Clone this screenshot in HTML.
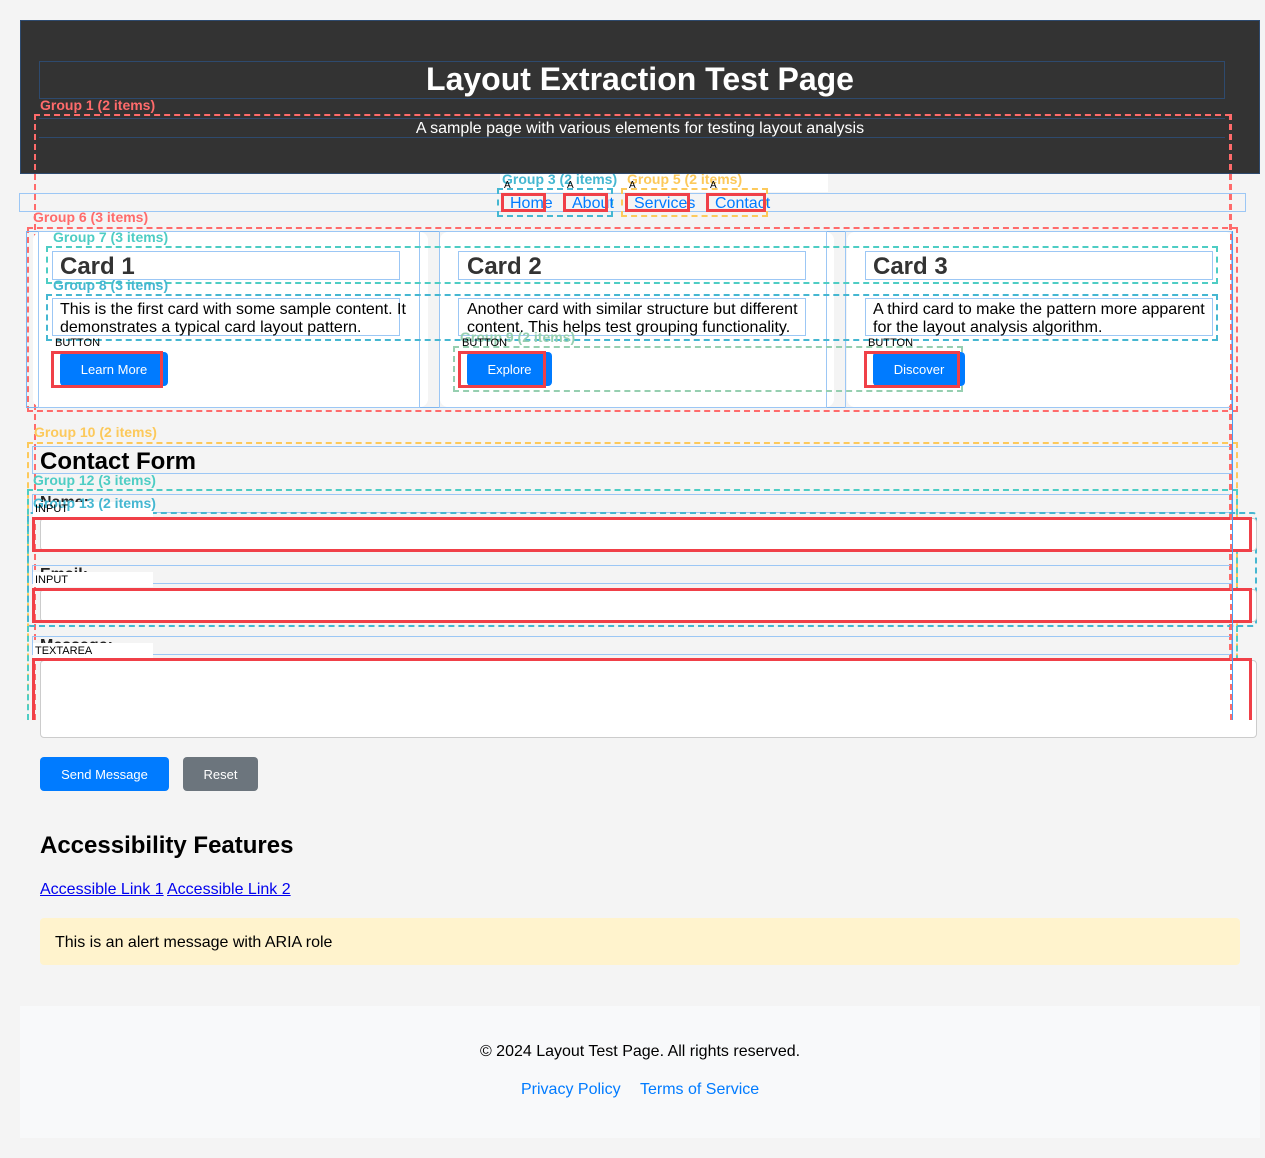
<!DOCTYPE html>
<html><head><meta charset="utf-8"><style>
*{box-sizing:border-box;margin:0;padding:0}
body{width:1265px;height:1158px;background:#f4f4f4;font-family:"Liberation Sans",Arial,sans-serif;position:relative;overflow:hidden;color:#000}
.a{position:absolute}
.blue{border:1px solid #9cc7f5}
.card{background:#fff;border-radius:8px}
.btn{background:#007bff;color:#fff;font-size:13px;border-radius:4px;display:flex;align-items:center;justify-content:center}
.lbl{font-size:14px;font-weight:bold;white-space:nowrap}
.tag{font-size:11px;white-space:nowrap;color:#000}
.red{border:2px dashed #ff6b6b}
.teal{border:2px dashed #4ecdc4}
.cyan{border:2px dashed #45b7d1}
.yel{border:2px dashed #fcc95b}
.grn{border:2px dashed #96cfb0}
.rs{border:3px solid #f04048}
.in{background:#fff;border:1px solid #ccc;border-radius:4px}
</style></head><body>
<!-- header -->
<div class="a" style="left:20px;top:20px;width:1240px;height:154px;background:#333;border:1px solid #2e4a6e"></div>
<div class="a" style="left:39px;top:61px;width:1186px;height:38px;border:1px solid #2e4a6e"></div>
<div class="a" style="left:0;top:59px;width:1280px;text-align:center;color:#fff;font-size:32px;font-weight:bold;line-height:40px">Layout Extraction Test Page</div>
<div class="a" style="left:39px;top:118px;width:1186px;height:20px;border-top:1px solid #2e4a6e;border-bottom:1px solid #2e4a6e"></div>
<div class="a" style="left:0;top:120px;width:1280px;text-align:center;color:#fff;font-size:16px;line-height:18px">A sample page with various elements for testing layout analysis</div>
<div class="a lbl" style="left:40px;top:97px;color:#ff6b6b">Group 1 (2 items)</div>
<div class="a red" style="left:34px;top:114px;width:1197px;height:606px;border-bottom:none"></div>
<!-- nav -->
<div class="a blue" style="left:19px;top:193px;width:1227px;height:19px"></div>
<div class="a" style="left:500px;top:174px;width:328px;height:18px;background:#fff"></div>
<div class="a lbl" style="left:502px;top:171px;color:#45b7d1">Group 3 (2 items)</div>
<div class="a lbl" style="left:627px;top:171px;color:#fcc95b">Group 5 (2 items)</div>
<div class="a cyan" style="left:497px;top:188px;width:116px;height:29px"></div>
<div class="a yel" style="left:621px;top:188px;width:147px;height:29px"></div>
<div class="a" style="left:510px;top:194px;font-size:16px;color:#007bff;line-height:19px">Home</div>
<div class="a" style="left:572px;top:194px;font-size:16px;color:#007bff;line-height:19px">About</div>
<div class="a" style="left:634px;top:194px;font-size:16px;color:#007bff;line-height:19px">Services</div>
<div class="a" style="left:715px;top:194px;font-size:16px;color:#007bff;line-height:19px">Contact</div>
<div class="a rs" style="left:501px;top:193px;width:45px;height:19px"></div>
<div class="a rs" style="left:563px;top:193px;width:45px;height:19px"></div>
<div class="a rs" style="left:625px;top:193px;width:65px;height:19px"></div>
<div class="a rs" style="left:706px;top:193px;width:60px;height:19px"></div>
<div class="a tag" style="left:504px;top:180px;font-size:10px">A</div>
<div class="a tag" style="left:567px;top:180px;font-size:10px">A</div>
<div class="a tag" style="left:629px;top:180px;font-size:10px">A</div>
<div class="a tag" style="left:710px;top:180px;font-size:10px">A</div>
<!-- cards -->
<div class="a lbl" style="left:33px;top:209px;color:#ff6b6b">Group 6 (3 items)</div>
<div class="a red" style="left:27px;top:227px;width:1211px;height:185px"></div>
<div class="a blue" style="left:26px;top:231px;width:1206px;height:177px;border-color:#7fb6f0"></div>
<div class="a card" style="left:33px;top:232px;width:395px;height:175px"></div>
<div class="a card" style="left:440px;top:232px;width:394px;height:175px"></div>
<div class="a card" style="left:847px;top:232px;width:386px;height:175px"></div>
<div class="a blue" style="left:38px;top:231px;width:382px;height:177px"></div>
<div class="a blue" style="left:439px;top:231px;width:388px;height:177px"></div>
<div class="a blue" style="left:845px;top:231px;width:387px;height:177px"></div>
<div class="a lbl" style="left:53px;top:229px;color:#4ecdc4">Group 7 (3 items)</div>
<div class="a teal" style="left:46px;top:246px;width:1172px;height:38px"></div>
<div class="a lbl" style="left:53px;top:277px;color:#45b7d1">Group 8 (3 items)</div>
<div class="a cyan" style="left:46px;top:294px;width:1172px;height:47px"></div>
<div class="a blue" style="left:52px;top:251px;width:348px;height:29px"></div>
<div class="a blue" style="left:458px;top:251px;width:348px;height:29px"></div>
<div class="a blue" style="left:865px;top:251px;width:348px;height:29px"></div>
<div class="a" style="left:60px;top:253px;font-size:24px;font-weight:bold;color:#333">Card 1</div>
<div class="a" style="left:467px;top:253px;font-size:24px;font-weight:bold;color:#333">Card 2</div>
<div class="a" style="left:873px;top:253px;font-size:24px;font-weight:bold;color:#333">Card 3</div>
<div class="a blue" style="left:52px;top:298px;width:348px;height:38px"></div>
<div class="a blue" style="left:458px;top:298px;width:348px;height:38px"></div>
<div class="a blue" style="left:865px;top:298px;width:348px;height:38px"></div>
<div class="a" style="left:60px;top:301px;width:350px;font-size:16px;line-height:18px">This is the first card with some sample content. It demonstrates a typical card layout pattern.</div>
<div class="a" style="left:467px;top:301px;width:340px;font-size:16px;line-height:18px">Another card with similar structure but different content. This helps test grouping functionality.</div>
<div class="a" style="left:873px;top:301px;width:340px;font-size:16px;line-height:18px">A third card to make the pattern more apparent for the layout analysis algorithm.</div>
<div class="a lbl" style="left:460px;top:329px;color:#96cfb0">Group 9 (2 items)</div>
<div class="a grn" style="left:453px;top:346px;width:510px;height:46px"></div>
<div class="a tag" style="left:55px;top:337px">BUTTON</div>
<div class="a tag" style="left:462px;top:337px">BUTTON</div>
<div class="a tag" style="left:868px;top:337px">BUTTON</div>
<div class="a btn" style="left:60px;top:352px;width:108px;height:34px">Learn More</div>
<div class="a btn" style="left:467px;top:352px;width:85px;height:34px">Explore</div>
<div class="a btn" style="left:873px;top:352px;width:92px;height:34px">Discover</div>
<div class="a rs" style="left:51px;top:351px;width:112px;height:37px"></div>
<div class="a rs" style="left:458px;top:351px;width:88px;height:37px"></div>
<div class="a rs" style="left:864px;top:351px;width:96px;height:37px"></div>
<!-- contact -->
<div class="a lbl" style="left:34px;top:424px;color:#fcc95b">Group 10 (2 items)</div>
<div class="a yel" style="left:27px;top:442px;width:1211px;height:278px;border-bottom:none"></div>
<div class="a blue" style="left:32px;top:446px;width:1200px;height:28px"></div>
<div class="a" style="left:40px;top:448px;font-size:24px;font-weight:bold;line-height:28px">Contact Form</div>
<div class="a lbl" style="left:33px;top:472px;color:#4ecdc4">Group 12 (3 items)</div>
<div class="a teal" style="left:27px;top:489px;width:1211px;height:231px;border-bottom:none"></div>
<div class="a blue" style="left:32px;top:494px;width:1200px;height:19px"></div>
<div class="a" style="left:40px;top:494px;font-size:16px;font-weight:bold;color:#222">Name:</div>
<div class="a cyan" style="left:27px;top:512px;width:1230px;height:115px;border-radius:4px"></div>
<div class="a" style="left:33px;top:502px;width:120px;height:15px;background:#fff"></div>
<div class="a lbl" style="left:33px;top:495px;color:#45b7d1">Group 13 (2 items)</div>
<div class="a tag" style="left:35px;top:503px">INPUT</div>
<div class="a in" style="left:40px;top:518px;width:1217px;height:33px"></div>
<div class="a rs" style="left:32px;top:517px;width:1220px;height:35px"></div>
<div class="a blue" style="left:32px;top:565px;width:1200px;height:19px"></div>
<div class="a" style="left:40px;top:566px;font-size:16px;font-weight:bold;color:#222">Email:</div>
<div class="a" style="left:33px;top:572px;width:120px;height:15px;background:#fff"></div>
<div class="a tag" style="left:35px;top:574px">INPUT</div>
<div class="a in" style="left:40px;top:589px;width:1217px;height:33px"></div>
<div class="a rs" style="left:32px;top:588px;width:1220px;height:35px"></div>
<div class="a blue" style="left:32px;top:636px;width:1200px;height:19px"></div>
<div class="a" style="left:40px;top:637px;font-size:16px;font-weight:bold;color:#222">Message:</div>
<div class="a" style="left:33px;top:643px;width:120px;height:15px;background:#fff"></div>
<div class="a tag" style="left:35px;top:645px">TEXTAREA</div>
<div class="a in" style="left:40px;top:660px;width:1217px;height:78px"></div>
<div class="a" style="left:32px;top:658px;width:1220px;height:62px;border:3px solid #f04048;border-bottom:none"></div>
<div class="a" style="left:1230px;top:114px;width:0;height:606px;border-left:2px dashed #ff6b6b"></div>
<div class="a" style="left:1232px;top:231px;width:1px;height:489px;background:#4a9ff0"></div>
<div class="a btn" style="left:40px;top:757px;width:129px;height:34px">Send Message</div>
<div class="a btn" style="left:183px;top:757px;width:75px;height:34px;background:#6c757d">Reset</div>
<!-- a11y -->
<div class="a" style="left:40px;top:832px;font-size:24px;font-weight:bold;line-height:28px">Accessibility Features</div>
<div class="a" style="left:40px;top:880px;font-size:16px;color:#00e;text-decoration:underline;line-height:19px">Accessible Link 1</div>
<div class="a" style="left:167px;top:880px;font-size:16px;color:#00e;text-decoration:underline;line-height:19px">Accessible Link 2</div>
<div class="a" style="left:40px;top:918px;width:1200px;height:47px;background:#fff3cd;border-radius:4px;padding:16px 15px;font-size:16px;line-height:17px">This is an alert message with ARIA role</div>
<!-- footer -->
<div class="a" style="left:20px;top:1006px;width:1240px;height:132px;background:#f8f9fa"></div>
<div class="a" style="left:0;top:1042px;width:1280px;text-align:center;font-size:16px;line-height:19px">© 2024 Layout Test Page. All rights reserved.</div>
<div class="a" style="left:521px;top:1080px;font-size:16px;color:#007bff;line-height:19px">Privacy Policy</div>
<div class="a" style="left:640px;top:1080px;font-size:16px;color:#007bff;line-height:19px">Terms of Service</div>
</body></html>
